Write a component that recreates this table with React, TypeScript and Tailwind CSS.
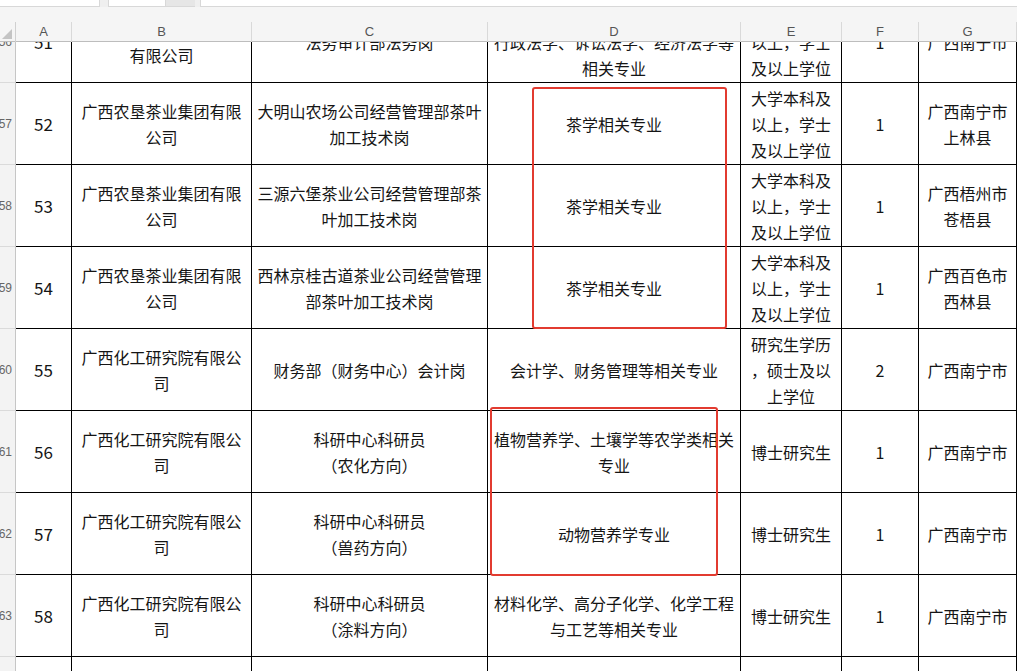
const cols = "grid grid-cols-[16px_56px_180px_236px_253px_101px_77px_1fr]";

type Row = {
  label: string;
  a: string;
  b: string[];
  c: string[];
  d: string[];
  e: string[];
  f: string;
  g: string[];
};

const NB = "\u00a0";

const rows: Row[] = [
  {
    label: "56",
    a: "51",
    b: [NB, "有限公司"],
    c: ["法务审计部法务岗"],
    d: [NB, "行政法学、诉讼法学、经济法学等", "相关专业"],
    e: ["大学本科及", "以上，学士", "及以上学位"],
    f: "1",
    g: ["广西南宁市"],
  },
  {
    label: "57",
    a: "52",
    b: ["广西农垦茶业集团有限", "公司"],
    c: ["大明山农场公司经营管理部茶叶", "加工技术岗"],
    d: ["茶学相关专业"],
    e: ["大学本科及", "以上，学士", "及以上学位"],
    f: "1",
    g: ["广西南宁市", "上林县"],
  },
  {
    label: "58",
    a: "53",
    b: ["广西农垦茶业集团有限", "公司"],
    c: ["三源六堡茶业公司经营管理部茶", "叶加工技术岗"],
    d: ["茶学相关专业"],
    e: ["大学本科及", "以上，学士", "及以上学位"],
    f: "1",
    g: ["广西梧州市", "苍梧县"],
  },
  {
    label: "59",
    a: "54",
    b: ["广西农垦茶业集团有限", "公司"],
    c: ["西林京桂古道茶业公司经营管理", "部茶叶加工技术岗"],
    d: ["茶学相关专业"],
    e: ["大学本科及", "以上，学士", "及以上学位"],
    f: "1",
    g: ["广西百色市", "西林县"],
  },
  {
    label: "60",
    a: "55",
    b: ["广西化工研究院有限公", "司"],
    c: ["财务部（财务中心）会计岗"],
    d: ["会计学、财务管理等相关专业"],
    e: ["研究生学历", "，硕士及以", "上学位"],
    f: "2",
    g: ["广西南宁市"],
  },
  {
    label: "61",
    a: "56",
    b: ["广西化工研究院有限公", "司"],
    c: ["科研中心科研员", "（农化方向）"],
    d: ["植物营养学、土壤学等农学类相关", "专业"],
    e: ["博士研究生"],
    f: "1",
    g: ["广西南宁市"],
  },
  {
    label: "62",
    a: "57",
    b: ["广西化工研究院有限公", "司"],
    c: ["科研中心科研员", "（兽药方向）"],
    d: ["动物营养学专业"],
    e: ["博士研究生"],
    f: "1",
    g: ["广西南宁市"],
  },
  {
    label: "63",
    a: "58",
    b: ["广西化工研究院有限公", "司"],
    c: ["科研中心科研员", "（涂料方向）"],
    d: ["材料化学、高分子化学、化学工程", "与工艺等相关专业"],
    e: ["博士研究生"],
    f: "1",
    g: ["广西南宁市"],
  },
  {
    label: "64",
    a: "",
    b: [],
    c: [],
    d: [],
    e: [],
    f: "",
    g: [],
  },
];

const Cell = ({ lines }: { lines: string[] }) => (
  <div className="flex flex-col items-center justify-center border-r border-b border-black text-center leading-[26px] overflow-hidden whitespace-nowrap">
    {lines.map((l, i) => (
      <div key={i}>{l}</div>
    ))}
  </div>
);

const headers = ["A", "B", "C", "D", "E", "F", "G"];

export default function App() {
  return (
    <div className="w-[1017px] h-[671px] overflow-hidden bg-[#f5f5f5] relative font-['Noto_Sans_CJK_SC',sans-serif]">
      {/* top toolbar strip */}
      <div className="h-[7px] flex bg-[#efefef]">
        <div className="w-[100px] bg-white border-r border-b border-[#d8d8d8]" />
        <div className="w-[8px]" />
        <div className="w-[58px] bg-white border-x border-b border-[#d8d8d8]" />
        <div className="w-[29px] bg-[#e6e6e6] border-b border-[#d8d8d8]" />
        <div className="w-[5px]" />
        <div className="flex-1 bg-white border-l border-b border-[#d8d8d8]" />
      </div>
      <div className="h-[15px]" />

      {/* column headers */}
      <div className={`${cols} h-[20px] border-b border-[#bdbdbd] text-[13px] text-[#555] font-['Liberation_Sans',sans-serif]`}>
        <div className="border-r border-[#d0d0d0] relative">
          <div className="absolute right-[3px] bottom-[3px] w-0 h-0 border-l-[10px] border-l-transparent border-b-[10px] border-b-[#c4c4c4]" />
        </div>
        {headers.map((h) => (
          <div key={h} className="flex items-center justify-center border-r border-[#d9d9d9]">
            {h}
          </div>
        ))}
      </div>

      {/* body */}
      <div className="h-[629px] overflow-hidden bg-white">
        <div className="-mt-[41px] text-[16px] text-[#151515]">
          {rows.map((r) => (
            <div key={r.label} className={`${cols} h-[82px]`}>
              <div className="bg-[#f3f3f3] border-r border-b border-r-[#c6c6c6] border-b-[#dadada] flex items-center justify-end pr-[3px] overflow-hidden text-[12px] text-[#666] font-['Liberation_Sans',sans-serif]">
                {r.label}
              </div>
              <div className="flex items-center justify-center border-r border-b border-black text-[17px]">
                {r.a}
              </div>
              <Cell lines={r.b} />
              <Cell lines={r.c} />
              <Cell lines={r.d} />
              <Cell lines={r.e} />
              <div className="flex items-center justify-center border-r border-b border-black">
                {r.f}
              </div>
              <Cell lines={r.g} />
            </div>
          ))}
        </div>
      </div>

      {/* red annotation boxes */}
      <div className="absolute left-[532px] top-[87px] w-[195px] h-[242px] border-2 border-[#e23b30] rounded-[3px]" />
      <div className="absolute left-[490px] top-[407px] w-[228px] h-[169px] border-2 border-[#e23b30] rounded-[3px]" />
    </div>
  );
}
